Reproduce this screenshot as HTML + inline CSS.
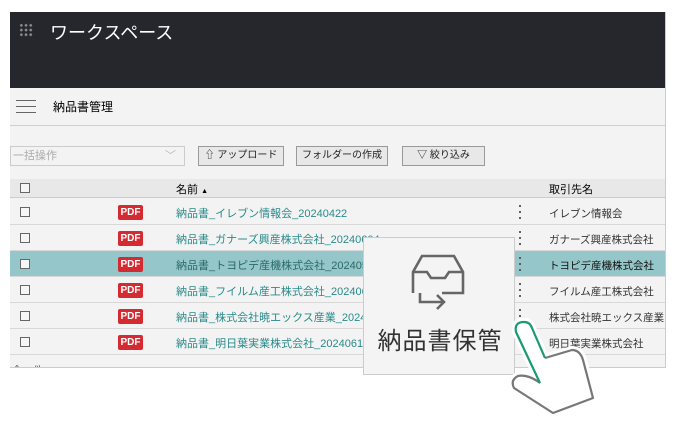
<!DOCTYPE html><html><head><meta charset="utf-8"><style>
*{margin:0;padding:0;box-sizing:border-box}
body{width:686px;height:431px;background:#fff;font-family:"Liberation Sans","Noto Sans CJK JP",sans-serif;position:relative;overflow:hidden}
.app{position:absolute;left:10px;top:12px;width:656px;height:356px;background:#f3f3f3;border-right:1px solid #ccc;border-bottom:1px solid #ccc;overflow:hidden}
.hd{height:76px;background:#25272d;color:#fff;font-size:18px}
.hd .t{position:absolute;left:40px;top:7px}
.dots{position:absolute;left:9px;top:11px;width:14px;height:14px;background-image:radial-gradient(circle,#8a8c90 1.3px,transparent 1.4px);background-size:4.7px 4.7px}
.sub{height:38px;border-bottom:1px solid #cfcfcf;position:relative;font-size:12px}
.ham{position:absolute;left:6px;top:12px;width:20px;height:13px;border-top:1px solid #666;border-bottom:1px solid #666}
.ham:after{content:"";position:absolute;left:0;right:0;top:5px;border-top:1px solid #666}
.sub .n{position:absolute;left:43px;top:10px}
.btn{position:absolute;top:134px;height:20px;border:1px solid #999;background:#e8e8e8;font-size:10px;line-height:18px;text-align:center;color:#222}
.sel{position:absolute;left:0;top:134px;width:175px;height:20px;border:1px solid #ccc;background:#f3f3f3;color:#aaa;font-size:11px;line-height:18px;padding-left:2px}
.th{position:absolute;left:0;top:167px;width:656px;height:19px;background:#e8e8e8;border-bottom:1px solid #ccc;font-size:11px}
.row{position:absolute;left:0;width:656px;height:26px;border-bottom:1px solid #d8d8d8;font-size:11px}
.row.h{background:#95c6c9}
.cb{position:absolute;left:10px;width:10px;height:10px;border:1px solid #666;background:#f6f6f6}
.pdf{position:absolute;left:108px;top:6px;width:25px;height:15px;background:#d42b33;border-radius:2px;color:#fff;font-size:10px;font-weight:bold;text-align:center;line-height:15px}
.nm{position:absolute;left:166px;top:6px;color:#2a8a8a;white-space:nowrap}
.co{position:absolute;left:539px;top:7px;color:#333;white-space:nowrap;font-size:10.5px}
.vd{position:absolute;left:509px;top:4px;width:2px;height:18px;background-image:radial-gradient(circle,#555 1px,transparent 1.2px);background-size:2px 6px}
.pop{position:absolute;left:363px;top:237px;width:152px;height:138px;background:#f4f4f4;border:1px solid #ccc}
</style></head><body>
<div class="app">
<div class="hd"><div class="dots"></div><div class="t">ワークスペース</div></div>
<div class="sub"><div class="ham"></div><div class="n">納品書管理</div></div>
<div class="sel">一括操作<span style="position:absolute;right:8px;top:0;color:#bbb">﹀</span></div>
<div class="btn" style="left:188px;width:86px">⇧ アップロード</div>
<div class="btn" style="left:286px;width:92px">フォルダーの作成</div>
<div class="btn" style="left:392px;width:83px">▽ 絞り込み</div>
<div class="th"><div class="cb" style="top:4px"></div><span style="position:absolute;left:166px;top:2px">名前 <span style="font-size:7px">▲</span></span><span style="position:absolute;left:539px;top:2px">取引先名</span></div>
<div class="row" style="top:187px"><div class="cb" style="top:8px"></div><div class="pdf">PDF</div><div class="nm">納品書_イレブン情報会_20240422</div><div class="vd"></div><div class="co">イレブン情報会</div></div>
<div class="row" style="top:213px"><div class="cb" style="top:8px"></div><div class="pdf">PDF</div><div class="nm">納品書_ガナーズ興産株式会社_20240604</div><div class="vd"></div><div class="co">ガナーズ興産株式会社</div></div>
<div class="row h" style="top:239px"><div class="cb" style="top:8px"></div><div class="pdf">PDF</div><div class="nm" style="color:#2a6a6a">納品書_トヨピデ産機株式会社_20240515</div><div class="vd"></div><div class="co" style="color:#111">トヨピデ産機株式会社</div></div>
<div class="row" style="top:265px"><div class="cb" style="top:8px"></div><div class="pdf">PDF</div><div class="nm">納品書_フイルム産工株式会社_20240610</div><div class="vd"></div><div class="co">フイルム産工株式会社</div></div>
<div class="row" style="top:291px"><div class="cb" style="top:8px"></div><div class="pdf">PDF</div><div class="nm">納品書_株式会社暁エックス産業_20240611</div><div class="vd"></div><div class="co">株式会社暁エックス産業</div></div>
<div class="row" style="top:317px"><div class="cb" style="top:8px"></div><div class="pdf">PDF</div><div class="nm">納品書_明日葉実業株式会社_20240612</div><div class="co">明日葉実業株式会社</div></div>
<div style="position:absolute;left:2px;top:350px;font-size:10px;color:#555">全 6 件</div>
</div>
<div class="pop">
<svg width="152" height="80" style="position:absolute;left:0;top:0"><g fill="none" stroke="#666" stroke-width="2.6"><path d="M49,55 V34 L58,18 H90 L99,34 V55 H78"/><path d="M49,34 H63 L67,40 H81 L85,34 H99"/><path d="M56,55 V64 H80 M73,57 L80,64 L73,71"/></g></svg>
<div style="position:absolute;left:0;width:152px;top:83px;text-align:center;font-size:24px;color:#333;letter-spacing:1px">納品書保管</div>
</div>
<svg width="686" height="431" style="position:absolute;left:0;top:0"><path d="M540,383 L516,332 Q514,322 524,322 Q530,322 532,328 L545,358 L572,350 Q580,350 583,360 L593,398 L553,413 L514,388 Q510,380 518,376 Q528,374 540,383" fill="#fff" stroke="#fff" stroke-width="8" stroke-linejoin="round"/><path d="M545,358 L572,350 Q580,350 583,360 L593,398 L553,413 L514,388 Q510,380 518,376 Q528,374 540,383" fill="none" stroke="#777" stroke-width="2.2" stroke-linejoin="round"/><path d="M540,383 L516,332 Q514,322 524,322 Q530,322 532,328 L545,358" fill="none" stroke="#1a9a70" stroke-width="2.2"/></svg>
</body></html>
